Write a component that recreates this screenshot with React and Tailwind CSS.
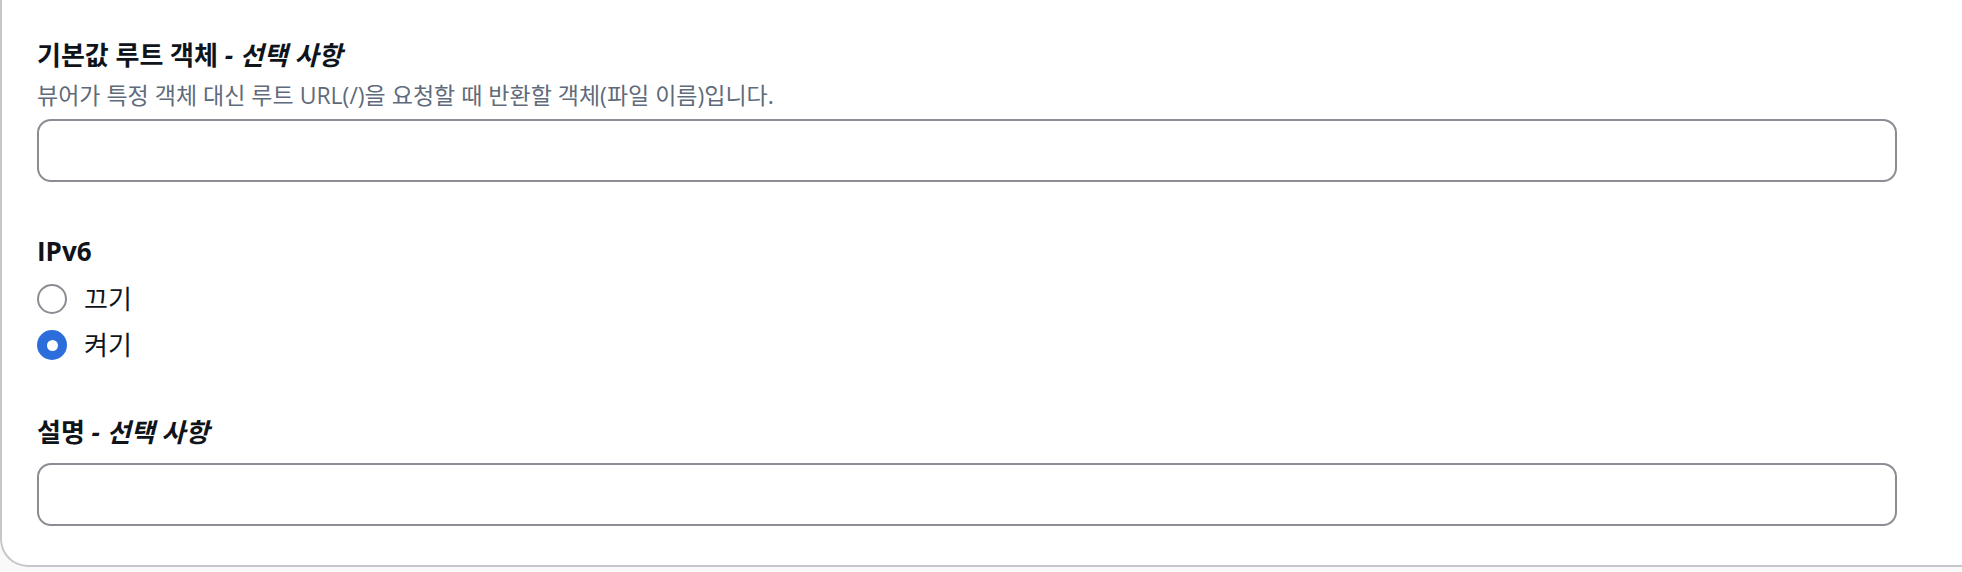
import { useState } from "react";

const font = { fontFamily: '"Open Sans", "Noto Sans CJK KR", sans-serif' };

function Label({ main, optional }) {
  return (
    <div className="text-[26px] leading-[38px] font-bold text-[#0f141a]">
      {main}
      {optional && <i className="font-bold"> - 선택 사항</i>}
    </div>
  );
}

function Radio({ checked, label, onClick }) {
  return (
    <label onClick={onClick} className="flex items-center h-[46px] cursor-pointer">
      {checked ? (
        <span className="w-[30px] h-[30px] rounded-full bg-[#2c6ddc] flex items-center justify-center">
          <span className="w-[11px] h-[11px] rounded-full bg-white" />
        </span>
      ) : (
        <span className="w-[30px] h-[30px] rounded-full border-[2.5px] border-[#8c8c94] bg-white" />
      )}
      <span className="ml-[17px] text-[26px] leading-[38px] text-[#0f141a]">{label}</span>
    </label>
  );
}

export default function App() {
  const [ipv6, setIpv6] = useState("on");

  return (
    <div className="w-[1962px] h-[572px] bg-[#f9f9fa] overflow-hidden" style={font}>
      <div className="h-[567px] bg-white border-l-2 border-b-2 border-[#c6c6cd] rounded-bl-[28px] pl-[35px] pr-[65px] pt-[36px]">
        {/* Default root object */}
        <Label main="기본값 루트 객체" optional />
        <p className="mt-[7px] text-[23px] leading-[28px] text-[#5f6b7a]">
          뷰어가 특정 객체 대신 루트 URL(/)을 요청할 때 반환할 객체(파일 이름)입니다.
        </p>
        <input className="mt-[10px] block w-full h-[63px] rounded-[14px] border-2 border-[#8c8c94] bg-white outline-none px-4" />

        {/* IPv6 */}
        <div className="mt-[50px]">
          <Label main="IPv6" />
          <div className="mt-[6px]">
            <Radio checked={ipv6 === "off"} label="끄기" onClick={() => setIpv6("off")} />
            <Radio checked={ipv6 === "on"} label="켜기" onClick={() => setIpv6("on")} />
          </div>
        </div>

        {/* Description */}
        <div className="mt-[45px]">
          <Label main="설명" optional />
          <input className="mt-[12px] block w-full h-[63px] rounded-[14px] border-2 border-[#8c8c94] bg-white outline-none px-4" />
        </div>
      </div>
    </div>
  );
}
